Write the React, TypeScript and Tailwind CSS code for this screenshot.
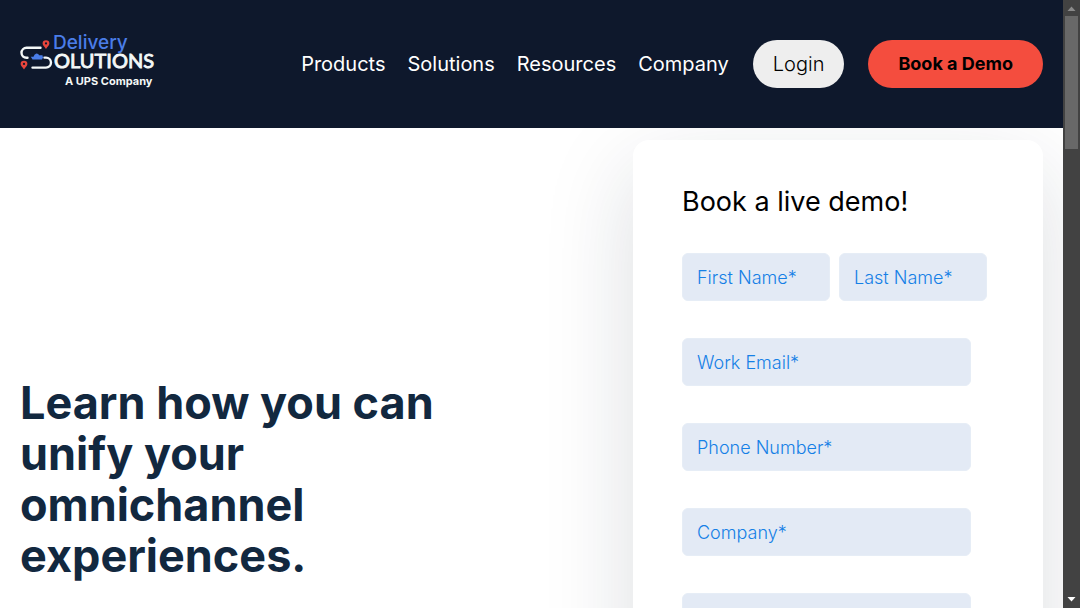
const links = ['Products', 'Solutions', 'Resources', 'Company'];

const wideFields = [
  { id: 'email', label: 'Work Email*', type: 'email' },
  { id: 'phone', label: 'Phone Number*', type: 'tel' },
  { id: 'company', label: 'Company*', type: 'text' },
  { id: 'title', label: 'Job Title*', type: 'text' },
];

function Pin({ x, y }: { x: number; y: number }) {
  return (
    <g transform={`translate(${x} ${y})`}>
      <path d="M0 8.500C-1.6 6-3.400 4.800-3.400 3a3.400 3.200 0 0 1 6.800 0C3.400 4.800 1.6 6 0 8.500Z" fill="#e8453c" />
      <circle cx="0" cy="2.9" r="1.1" fill="#0e182c" />
    </g>
  );
}

function Logo() {
  return (
    <svg width="140" height="60" viewBox="0 0 140 60" role="img" aria-label="Delivery Solutions, a UPS Company">
      <g fill="none" stroke="#f4f8f8" strokeWidth="2.4" strokeLinecap="round">
        <path d="M20.500 13.800H6.500A5 5 0 0 0 6.500 23.800H7.500" />
        <path d="M12.500 33.600H26A5 5 0 0 0 26 23.600H24.500" />
      </g>
      <path d="M10.800 22.800H13.500L14.500 20.800L16.300 19.500L18.300 20L19 21.200H21.800L22.400 20.800V22.600H23.500L22 25.400H12.500Z" fill="#4a7de8" />
      <Pin x={26} y={6.5} />
      <Pin x={4} y={27} />
      <text x="33" y="15" fontFamily="Inter, sans-serif" fontSize="19" fontWeight="500" fill="#4a7de8">Delivery</text>
      <text x="34" y="34" fontFamily="Lato, sans-serif" fontSize="20" fill="#f4f8f8" stroke="#f4f8f8" strokeWidth="0.9">OLUTIONS</text>
      <text x="45" y="51" fontFamily="Inter, sans-serif" fontSize="11" fontWeight="700" fill="#f4f8f8">A UPS Company</text>
    </svg>
  );
}

function Field({ id, label, type }: { id: string; label: string; type: string }) {
  return (
    <div className="min-w-0 flex-1">
      <input
        id={id}
        type={type}
        aria-label={label}
        placeholder={label}
        className="block h-12 w-full rounded-md border border-[#e6edf6] bg-[#e3eaf5] px-3.5 text-lg font-light text-[#12283f] outline-none placeholder:text-[#1580e6]"
      />
    </div>
  );
}

export default function App() {
  return (
    <div className="flex h-screen overflow-hidden bg-white font-['Inter',sans-serif]">
      <div className="flex min-w-0 flex-1 flex-col overflow-hidden">
        <header className="relative z-10 flex h-32 shrink-0 items-center justify-between bg-[#0e182c] px-5">
          <a href="#home">
            <Logo />
          </a>
          <nav className="flex items-center gap-6 text-xl">
            <div className="flex items-center gap-[22px] text-white">
              {links.map((link) => (
                <a key={link} href={`#${link}`}>{link}</a>
              ))}
            </div>
            <a href="#login" className="flex h-12 items-center rounded-full bg-[#eeeeee] px-5 font-light text-black">Login</a>
            <a href="#demo" className="flex h-12 items-center rounded-full bg-[#f44d3e] px-[30px] text-lg font-bold text-black">Book a Demo</a>
          </nav>
        </header>
        <main className="flex items-start justify-between px-5">
          <h1 className="w-[450px] pt-[249px] text-[45px] leading-[51px] font-bold text-[#12283f]">
            Learn how you can unify your omnichannel experiences.
          </h1>
          <section className="mt-3 w-[410px] rounded-2xl bg-white pt-11 pr-12 pb-12 pl-[49px] shadow-[0_30px_90px_rgba(20,35,55,0.15)]">
            <h2 className="text-[27px] leading-9 text-black">Book a live demo!</h2>
            <form className="mt-[33px] flex flex-col gap-[37px]">
              <div className="mr-2 flex gap-[9px]">
                <Field id="first" label="First Name*" type="text" />
                <Field id="last" label="Last Name*" type="text" />
              </div>
              {wideFields.map((field) => (
                <div key={field.id} className="mr-6 flex">
                  <Field {...field} />
                </div>
              ))}
            </form>
          </section>
        </main>
      </div>
      <div aria-hidden="true" className="flex w-[17px] shrink-0 flex-col items-center justify-between bg-[#424242] pt-1.5 pb-1.5">
        <div className="flex w-full flex-col items-center gap-[5px]">
          <svg width="9" height="5" viewBox="0 0 9 5"><path d="M0.500 5L4.500 0.500L8.500 5Z" fill="#8a8a8a" /></svg>
          <div className="h-[133px] w-[13px] bg-[#686868]" />
        </div>
        <svg width="9" height="5" viewBox="0 0 9 5"><path d="M0.500 0L4.500 4.500L8.500 0Z" fill="#ffffff" /></svg>
      </div>
    </div>
  );
}
